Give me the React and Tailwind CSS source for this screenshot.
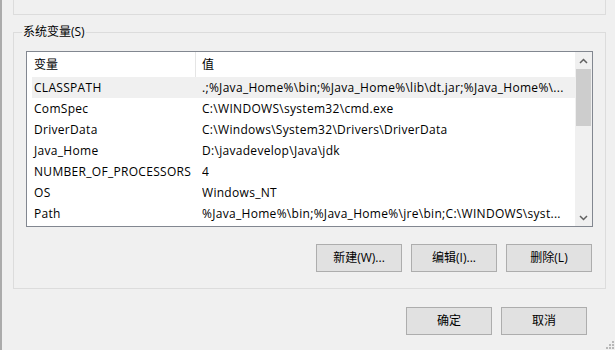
import React from "react";

const rows = [
  ["CLASSPATH", ".;%Java_Home%\\bin;%Java_Home%\\lib\\dt.jar;%Java_Home%\\...", true],
  ["ComSpec", "C:\\WINDOWS\\system32\\cmd.exe"],
  ["DriverData", "C:\\Windows\\System32\\Drivers\\DriverData"],
  ["Java_Home", "D:\\javadevelop\\Java\\jdk"],
  ["NUMBER_OF_PROCESSORS", "4"],
  ["OS", "Windows_NT"],
  ["Path", "%Java_Home%\\bin;%Java_Home%\\jre\\bin;C:\\WINDOWS\\syst..."],
];

function Btn({ children, className = "" }) {
  return (
    <div
      className={
        "w-[86px] h-[28px] border border-[#adadad] bg-[#e1e1e1] flex items-center justify-center text-[12px] text-black " +
        className
      }
    >
      {children}
    </div>
  );
}

export default function App() {
  return (
    <div
      className="w-[615px] h-[350px] bg-[#f0f0f0] flex overflow-hidden text-black"
      style={{ fontFamily: '"Open Sans", "Noto Sans CJK SC", sans-serif' }}
    >
      <div className="w-[2px] h-full bg-[#ababab] shrink-0" />
      <div className="flex-1 flex flex-col relative">
        {/* remnant of upper group box */}
        <div className="ml-[11px] w-[593px] h-[15px] border-l border-r border-b border-[#dcdcdc]" />

        {/* system variables group box */}
        <div className="relative ml-[11px] mt-[17px] w-[593px] h-[257px] border border-[#dcdcdc]">
          <div className="absolute left-[8px] top-[-9px] px-[1px] bg-[#f0f0f0] text-[12px] leading-[16px]">
            系统变量(S)
          </div>

          <div className="ml-[12px] mt-[18px] w-[567px] h-[176px] border border-[#828790] bg-white flex">
            <div className="flex-1 flex flex-col pl-[5px] min-w-0">
              <div className="h-[25px] flex items-stretch text-[12px] shrink-0">
                <div className="w-[164px] pl-[2px] border-r border-[#e5e5e5] flex items-center">变量</div>
                <div className="pl-[6px] flex items-center">值</div>
              </div>
              {rows.map(([name, val, sel]) => (
                <div
                  key={name}
                  className={
                    "h-[21px] flex items-center text-[12px] tracking-[0.3px] whitespace-nowrap overflow-hidden pt-[1px] " +
                    (sel ? "bg-[#f0f0f0]" : "")
                  }
                >
                  <div className="w-[170px] pl-[2px] shrink-0 overflow-hidden">{name}</div>
                  <div className="overflow-hidden">{val}</div>
                </div>
              ))}
            </div>
            {/* scrollbar */}
            <div className="w-[17px] shrink-0 bg-[#f0f0f0] flex flex-col items-center">
              <div className="h-[17px] w-full flex items-center justify-center">
                <svg width="9" height="6" viewBox="0 0 9 6">
                  <path d="M1 5 L4.5 1.5 L8 5" fill="none" stroke="#606060" strokeWidth="1.5" />
                </svg>
              </div>
              <div className="w-[15px] h-[57px] bg-[#cdcdcd]" />
              <div className="flex-1" />
              <div className="h-[17px] w-full flex items-center justify-center">
                <svg width="9" height="6" viewBox="0 0 9 6">
                  <path d="M1 1 L4.5 4.5 L8 1" fill="none" stroke="#606060" strokeWidth="1.5" />
                </svg>
              </div>
            </div>
          </div>

          <div className="mt-[17px] flex justify-end gap-[9px] pr-[13px]">
            <Btn>新建(W)...</Btn>
            <Btn>编辑(I)...</Btn>
            <Btn>删除(L)</Btn>
          </div>
        </div>

        <div className="mt-[18px] flex justify-end gap-[9px] pr-[28px]">
          <Btn>确定</Btn>
          <Btn>取消</Btn>
        </div>

        {/* resize grip */}
        <svg className="absolute right-0 bottom-0" width="12" height="12" viewBox="0 0 12 12">
          <rect x="9" y="3" width="2" height="2" fill="#b8b8b8" />
          <rect x="6" y="6" width="2" height="2" fill="#b8b8b8" />
          <rect x="9" y="6" width="2" height="2" fill="#b8b8b8" />
          <rect x="3" y="9" width="2" height="2" fill="#b8b8b8" />
          <rect x="6" y="9" width="2" height="2" fill="#b8b8b8" />
          <rect x="9" y="9" width="2" height="2" fill="#b8b8b8" />
        </svg>
      </div>
    </div>
  );
}
